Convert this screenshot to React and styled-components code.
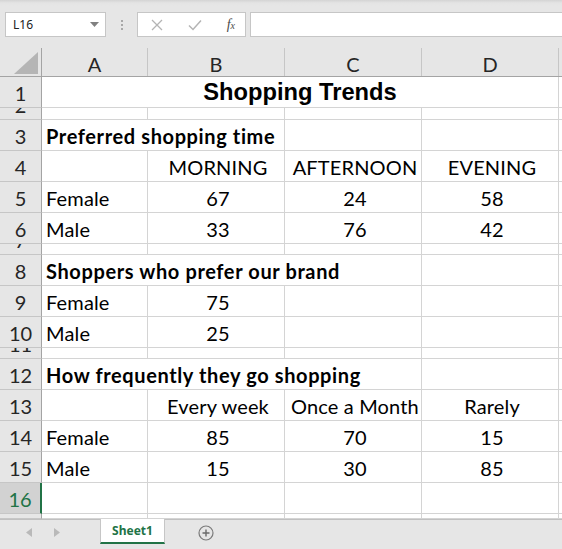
import React from "react";
import styled, { createGlobalStyle, css } from "styled-components";

const GlobalStyle = createGlobalStyle`
  html, body {
    margin: 0;
    padding: 0;
    background: #ffffff;
    overflow: hidden;
  }
  body {
    font-family: Lato, "Noto Sans", sans-serif;
  }
  * { box-sizing: border-box; }
`;

const COLS = "42px 106px 137px 137px 137px 1fr";

const rows = [
  { n: 1, h: 31, cells: [{ t: "Shopping Trends", span: 4, title: true }] },
  { n: 2, h: 12, cells: [{}, {}, {}, {}] },
  { n: 3, h: 31, cells: [{ t: "Preferred shopping time", span: 2, bold: true }, {}, {}] },
  { n: 4, h: 31, cells: [{}, { t: "MORNING", c: true }, { t: "AFTERNOON", c: true }, { t: "EVENING", c: true }] },
  { n: 5, h: 31, cells: [{ t: "Female" }, { t: "67", c: true }, { t: "24", c: true }, { t: "58", c: true }] },
  { n: 6, h: 31, cells: [{ t: "Male" }, { t: "33", c: true }, { t: "76", c: true }, { t: "42", c: true }] },
  { n: 7, h: 11, cells: [{}, {}, {}, {}] },
  { n: 8, h: 31, cells: [{ t: "Shoppers who prefer our brand", span: 3, bold: true }, {}] },
  { n: 9, h: 31, cells: [{ t: "Female" }, { t: "75", c: true }, {}, {}] },
  { n: 10, h: 31, cells: [{ t: "Male" }, { t: "25", c: true }, {}, {}] },
  { n: 11, h: 11, cells: [{}, {}, {}, {}] },
  { n: 12, h: 31, cells: [{ t: "How frequently they go shopping", span: 3, bold: true }, {}] },
  { n: 13, h: 31, cells: [{}, { t: "Every week", c: true }, { t: "Once a Month", c: true }, { t: "Rarely", c: true }] },
  { n: 14, h: 31, cells: [{ t: "Female" }, { t: "85", c: true }, { t: "70", c: true }, { t: "15", c: true }] },
  { n: 15, h: 31, cells: [{ t: "Male" }, { t: "15", c: true }, { t: "30", c: true }, { t: "85", c: true }] },
  { n: 16, h: 31, cells: [{}, {}, {}, {}], selected: true },
  { n: 17, h: 5, cells: [{}, {}, {}, {}] },
];

export default function App() {
  return (
    <>
      <GlobalStyle />
      <Window>
        <FormulaBar>
          <NameBox>
            <span>L16</span>
            <svg width="9" height="5" viewBox="0 0 9 5">
              <polygon points="0,0 9,0 4.5,5" fill="#808080" />
            </svg>
          </NameBox>
          <Grip>
            <i /><i /><i />
          </Grip>
          <FxButtons>
            <svg width="12" height="12" viewBox="0 0 12 12">
              <path d="M1 1 L11 11 M11 1 L1 11" stroke="#b4b4b4" strokeWidth="1.3" fill="none" />
            </svg>
            <svg width="14" height="12" viewBox="0 0 14 12">
              <path d="M1 6.5 L5 10.5 L13 1.5" stroke="#b4b4b4" strokeWidth="1.5" fill="none" />
            </svg>
            <FxLabel>
              f<small>x</small>
            </FxLabel>
          </FxButtons>
          <FormulaInput />
        </FormulaBar>

        <Sheet>
          <HeaderRow>
            <Corner>
              <svg width="24" height="22" viewBox="0 0 24 22">
                <polygon points="24,0 24,22 0,22" fill="#b5b5b5" />
              </svg>
            </Corner>
            {["A", "B", "C", "D"].map((l) => (
              <ColHead key={l}>{l}</ColHead>
            ))}
            <ColHead $last />
          </HeaderRow>

          {rows.map((r) => (
            <Row key={r.n} $h={r.h}>
              <RowHead $selected={r.selected}>
                <CellText>{r.n}</CellText>
              </RowHead>
              {r.cells.map((cell, i) => (
                <Cell
                  key={i}
                  $span={cell.span || 1}
                  $center={cell.c || cell.title}
                  $bold={cell.bold}
                  $title={cell.title}
                >
                  {cell.t && <CellText>{cell.t}</CellText>}
                </Cell>
              ))}
              <Cell $last />
            </Row>
          ))}
        </Sheet>

        <TabBar>
          <NavArrows>
            <svg width="6" height="9" viewBox="0 0 6 9">
              <polygon points="6,0 6,9 0,4.5" fill="#b9b9b9" />
            </svg>
            <svg width="6" height="9" viewBox="0 0 6 9">
              <polygon points="0,0 0,9 6,4.5" fill="#b9b9b9" />
            </svg>
          </NavArrows>
          <SheetTab>Sheet1</SheetTab>
          <AddSheet>
            <svg width="16" height="16" viewBox="0 0 16 16">
              <circle cx="8" cy="8" r="7" stroke="#7a7a7a" strokeWidth="1.2" fill="none" />
              <path d="M8 4.5 V11.5 M4.5 8 H11.5" stroke="#6a6a6a" strokeWidth="1.4" />
            </svg>
          </AddSheet>
        </TabBar>
      </Window>
    </>
  );
}

const Window = styled.div`
  width: 562px;
  height: 549px;
  display: flex;
  flex-direction: column;
  overflow: hidden;
  background: #ffffff;
`;

const FormulaBar = styled.div`
  height: 48px;
  flex: none;
  display: flex;
  align-items: flex-start;
  padding: 12px 0 0 5px;
  background: linear-gradient(#d4d4d4 0, #e4e4e4 3px, #e6e6e6 6px);
`;

const NameBox = styled.div`
  width: 101px;
  height: 25px;
  background: #ffffff;
  border: 1px solid #c6c6c6;
  display: flex;
  align-items: center;
  justify-content: space-between;
  padding: 0 6px 0 7px;
  font-family: "Noto Sans", sans-serif;
  font-size: 12px;
  color: #222;
`;

const Grip = styled.div`
  width: 31px;
  height: 25px;
  display: flex;
  flex-direction: column;
  align-items: center;
  justify-content: center;
  gap: 2px;
  i {
    display: block;
    width: 2px;
    height: 2px;
    background: #a8a8a8;
  }
`;

const FxButtons = styled.div`
  width: 109px;
  height: 25px;
  background: #ffffff;
  border: 1px solid #c6c6c6;
  display: flex;
  align-items: center;
  justify-content: space-between;
  padding: 0 10px 0 13px;
`;

const FxLabel = styled.span`
  font-family: "Liberation Serif", serif;
  font-style: italic;
  font-size: 14px;
  color: #4a4a4a;
  small {
    font-size: 10px;
  }
`;

const FormulaInput = styled.div`
  flex: 1;
  height: 25px;
  margin-left: 4px;
  background: #ffffff;
  border: 1px solid #c6c6c6;
  border-right: none;
`;

const Sheet = styled.div`
  flex: none;
  display: flex;
  flex-direction: column;
`;

const HeaderRow = styled.div`
  display: grid;
  grid-template-columns: ${COLS};
  height: 29px;
  background: #e6e6e6;
  border-bottom: 1px solid #a4a4a4;
`;

const Corner = styled.div`
  border-right: 1px solid #a4a4a4;
  display: flex;
  align-items: flex-end;
  justify-content: flex-end;
  padding: 0 3px 2px 0;
`;

const ColHead = styled.div`
  border-right: 1px solid ${(p) => (p.$last ? "transparent" : "#c6c6c6")};
  display: flex;
  align-items: center;
  justify-content: center;
  padding-top: 3px;
  font-size: 20px;
  color: #262626;
`;

const Row = styled.div`
  display: grid;
  grid-template-columns: ${COLS};
  height: ${(p) => p.$h}px;
  overflow: hidden;
`;

const CellText = styled.span`
  display: block;
  line-height: 24px;
  white-space: nowrap;
  flex: none;
`;

const RowHead = styled.div`
  background: ${(p) => (p.$selected ? "#d2d2d2" : "#e6e6e6")};
  color: ${(p) => (p.$selected ? "#217346" : "#262626")};
  border-right: ${(p) => (p.$selected ? "2px solid #217346" : "1px solid #a4a4a4")};
  border-bottom: 1px solid #c6c6c6;
  display: flex;
  align-items: flex-end;
  justify-content: center;
  padding-bottom: 2px;
  overflow: hidden;
  font-size: 20px;
`;

const Cell = styled.div`
  grid-column: span ${(p) => p.$span || 1};
  border-right: 1px solid ${(p) => (p.$last ? "transparent" : "#d4d4d4")};
  border-bottom: 1px solid #d4d4d4;
  display: flex;
  align-items: flex-end;
  justify-content: ${(p) => (p.$center ? "center" : "flex-start")};
  padding: 0 0 2px 4px;
  overflow: hidden;
  font-size: 20px;
  color: #000;
  font-weight: ${(p) => (p.$bold ? 700 : 400)};
  letter-spacing: ${(p) => (p.$bold ? "0.62px" : "0.15px")};
  ${(p) =>
    p.$title &&
    css`
      padding-left: 0;
      font-family: "Liberation Sans", Arial, sans-serif;
      font-size: 23.7px;
      font-weight: 700;
      letter-spacing: 0;
      ${CellText} {
        line-height: 26px;
      }
    `}
`;

const TabBar = styled.div`
  flex: 1;
  display: flex;
  align-items: flex-start;
  background: #e6e6e6;
  border-top: 1px solid #c0c0c0;
`;

const NavArrows = styled.div`
  width: 100px;
  height: 25px;
  display: flex;
  align-items: center;
  justify-content: flex-start;
  gap: 22px;
  padding-left: 26px;
`;

const SheetTab = styled.div`
  width: 65px;
  height: 25px;
  margin-top: -1px;
  background: #ffffff;
  border-left: 1px solid #c6c6c6;
  border-right: 1px solid #c6c6c6;
  border-bottom: 2px solid #217346;
  display: flex;
  align-items: center;
  justify-content: center;
  font-family: "Noto Sans", sans-serif;
  font-size: 12px;
  font-weight: 700;
  color: #217346;
`;

const AddSheet = styled.div`
  width: 82px;
  height: 25px;
  display: flex;
  align-items: center;
  justify-content: center;
`;
